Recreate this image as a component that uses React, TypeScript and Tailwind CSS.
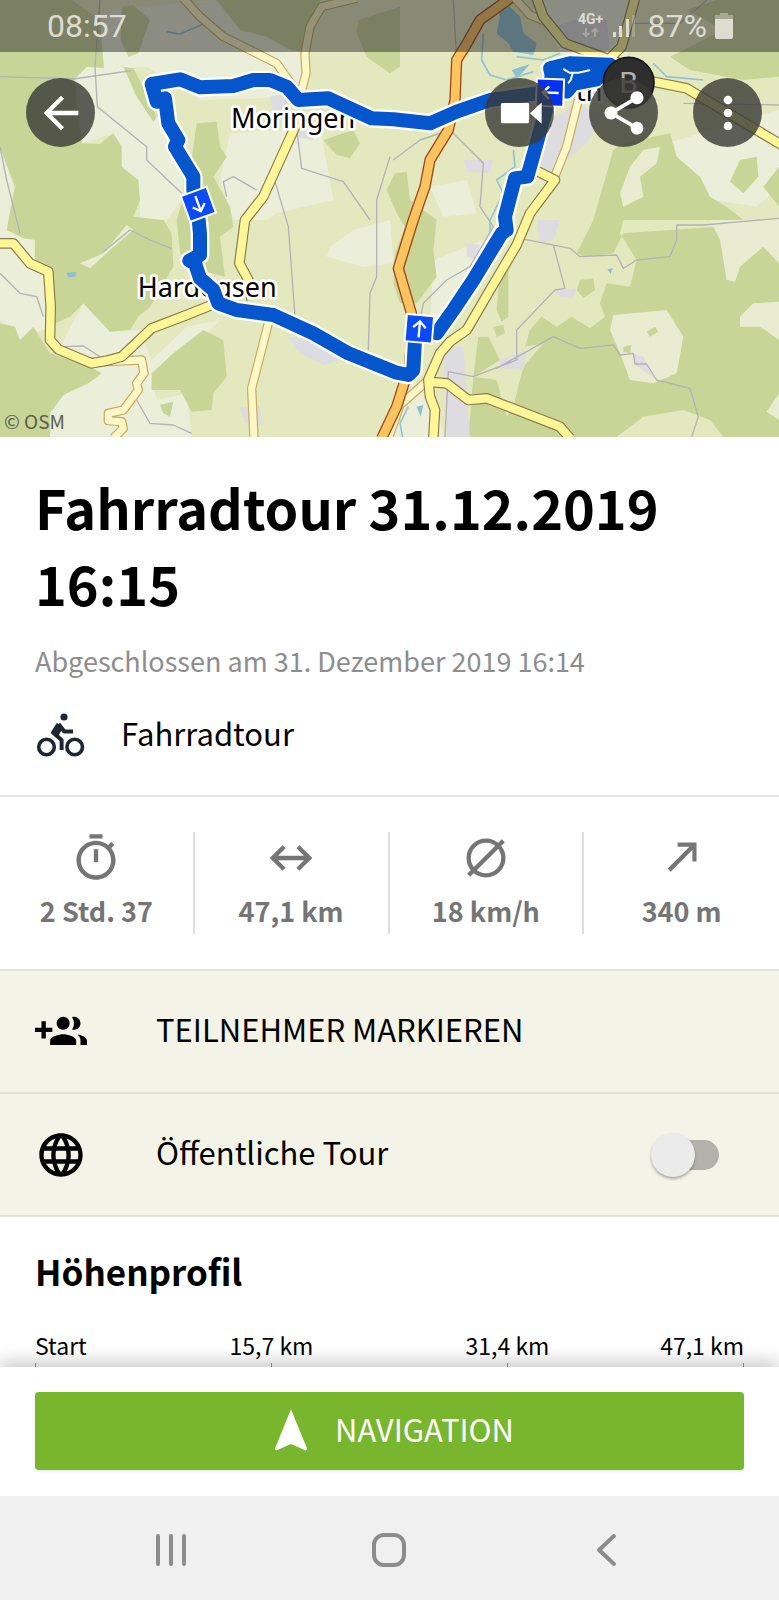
import React from "react";

type IconProps = { d: string; className?: string };

const Icon = ({ d, className = "size-[52px]" }: IconProps) => (
  <svg viewBox="0 0 24 24" fill="currentColor" aria-hidden="true" className={className}>
    <path d={d} />
  </svg>
);

const icons = {
  back: "M20 11H7.83l5.59-5.59L12 4l-8 8 8 8 1.41-1.41L7.83 13H20v-2z",
  video: "M3.9 7.4h11.6c.4 0 .7.3.7.7v7.9c0 .4-.3.7-.7.7H3.9c-.4 0-.7-.3-.7-.7V8.1c0-.4.3-.7.7-.7zM22 7.2v9.8l-5.4-4.9z",
  share:
    "M18 16.08c-.76 0-1.44.3-1.96.77L8.91 12.7c.05-.23.09-.46.09-.7s-.04-.47-.09-.7l7.05-4.11c.54.5 1.25.81 2.04.81 1.66 0 3-1.34 3-3s-1.34-3-3-3-3 1.34-3 3c0 .24.04.47.09.7L8.04 9.81C7.5 9.31 6.79 9 6 9c-1.66 0-3 1.34-3 3s1.34 3 3 3c.79 0 1.5-.31 2.04-.81l7.12 4.16c-.05.21-.08.43-.08.65 0 1.61 1.31 2.92 2.92 2.92s2.92-1.31 2.92-2.92-1.31-2.92-2.92-2.92z",
  more: "M12 8c1.1 0 2-.9 2-2s-.9-2-2-2-2 .9-2 2 .9 2 2 2zm0 2c-1.1 0-2 .9-2 2s.9 2 2 2 2-.9 2-2-.9-2-2-2zm0 6c-1.1 0-2 .9-2 2s.9 2 2 2 2-.9 2-2-.9-2-2-2z",
  timer:
    "M15 1H9v2h6V1zm-4 13h2V8h-2v6zm8.03-6.61l1.42-1.42c-.43-.51-.9-.99-1.41-1.41l-1.42 1.42C16.07 4.74 14.12 4 12 4c-4.97 0-9 4.03-9 9s4.02 9 9 9 9-4.03 9-9c0-2.12-.74-4.07-1.97-5.61zM12 20c-3.87 0-7-3.13-7-7s3.13-7 7-7 7 3.13 7 7-3.13 7-7 7z",
  ascent: "M10 4.9v1.9h5.4L5.4 16.9l1.4 1.4L16.8 8.2v5.4h1.9V4.9z",
  groupAdd:
    "M8 10H5V7H3v3H0v2h3v3h2v-3h3v-2zm10 1c1.66 0 2.99-1.34 2.99-3S19.66 5 18 5c-.32 0-.63.05-.91.14.57.81.9 1.79.9 2.86s-.34 2.04-.9 2.86c.28.09.59.14.91.14zm-5 0c1.66 0 2.99-1.34 2.99-3S14.66 5 13 5c-1.66 0-3 1.34-3 3s1.34 3 3 3zm6.62 2.16c.83.73 1.38 1.66 1.38 2.84v2h3v-2c0-1.54-2.37-2.49-4.38-2.84zM13 13c-2 0-6 1-6 3v2h12v-2c0-2-4-3-6-3z",
  globe:
    "M11.99 2C6.47 2 2 6.48 2 12s4.47 10 9.99 10C17.52 22 22 17.52 22 12S17.52 2 11.99 2zm6.93 6h-2.95c-.32-1.25-.78-2.45-1.38-3.56 1.84.63 3.37 1.91 4.33 3.56zM12 4.04c.83 1.2 1.48 2.53 1.91 3.96h-3.82c.43-1.43 1.08-2.76 1.91-3.96zM4.26 14C4.1 13.36 4 12.69 4 12s.1-1.36.26-2h3.38c-.08.66-.14 1.32-.14 2s.06 1.34.14 2H4.26zm.82 2h2.95c.32 1.25.78 2.45 1.38 3.56-1.84-.63-3.37-1.9-4.33-3.56zm2.95-8H5.08c.96-1.66 2.49-2.93 4.33-3.56C8.81 5.55 8.35 6.75 8.03 8zM12 19.96c-.83-1.2-1.48-2.53-1.91-3.96h3.82c-.43 1.43-1.08 2.76-1.91 3.96zM14.34 14H9.66c-.09-.66-.16-1.32-.16-2s.07-1.35.16-2h4.68c.09.65.16 1.32.16 2s-.07 1.34-.16 2zm.25 5.56c.6-1.11 1.06-2.31 1.38-3.56h2.95c-.96 1.65-2.49 2.93-4.33 3.56zM16.36 14c.08-.66.14-1.32.14-2s-.06-1.34-.14-2h3.38c.16.64.26 1.31.26 2s-.1 1.36-.26 2h-3.38z",
  navigate: "M12 2L4.5 20.29l.71.71L12 18l6.79 3 .71-.71z",
};

const pale = [
  "M312 30 640 0 900 150 905 290 600 300 440 200 300 210z",
  "M225 205 370 190 470 350 560 440 545 600 500 660 420 660 420 590 365 500 340 400 250 430z",
  "M690 400 960 380 1000 600 830 640 800 660 700 660 660 540z",
  "M0 440 40 560 20 690 100 715 105 790 140 820 150 980 60 1020 0 960z",
  "M180 1040 250 910 330 995 420 990 455 1080 560 980 660 960 600 1020 520 1060 455 1130 470 1200 560 1180 575 1311 150 1311 150 1240 190 1185 300 1130z",
  "M990 740 1060 690 1170 660 1180 790 1090 800 980 770z",
  "M1600 0 1900 0 1880 180 1680 160z",
  "M2000 430 2337 330 2337 560 2270 620 2140 600 2040 540z",
  "M1300 780 1500 700 1400 900 1290 960z",
  "M1230 1150 1300 1150 1330 1311 1150 1311z",
  "M1290 560 1400 540 1430 640 1330 650z",
];

const forest = [
  "M0 0H215L300 60 312 205 260 200 222 240 245 430 300 432 340 400 365 440 365 500 415 540 420 600 400 650 490 660 515 700 520 800 450 920 415 950 390 990 330 995 250 910 210 950 165 970 150 800 105 790 105 720 70 715 20 690 45 560 0 440z",
  "M0 970 45 980 60 1020 100 980 150 1060 270 1100 305 1120 265 1150 190 1185 150 1240 150 1311H0z",
  "M610 990 670 1020 680 1130 640 1180 635 1230 575 1235 540 1170 455 1170 455 1120 520 1060z",
  "M650 0H960L945 90 915 155 870 150 800 110 720 90z",
  "M365 20 400 15 450 60 415 160 385 170 362 120z",
  "M1075 60 1200 20 1200 200 1170 220 1100 170 1070 100z",
  "M370 200 400 205 450 300 470 350 460 365 410 290z",
  "M590 370 650 365 660 440 680 470 640 530 690 620 700 680 660 710 675 830 600 810 540 760 530 660 560 560 575 480z",
  "M970 420 1060 390 1080 430 1050 475 1010 465z",
  "M2010 170 2170 90 2060 30 2150 0H2337V230L2230 240 2070 210z",
  "M1870 430 2010 400 2030 470 2100 530 2130 590 2180 620 2230 660 2150 680 1870 700 1840 760 1760 770 1730 760 1780 660 1840 450z",
  "M2220 480 2270 470 2275 530 2230 580 2190 545z",
  "M2290 560 2337 500V620z",
  "M1160 570 1185 520 1220 515 1230 600 1310 660 1300 750 1310 830 1250 910 1200 910 1180 850 1185 760 1215 680 1190 640z",
  "M1870 660 1860 700 1910 780 1890 860 1820 850 1800 910 1815 950 1770 985 1715 950 1670 980 1625 950 1590 990 1575 1040 1630 1030 1570 1100 1540 1220 1520 1250 1490 1140 1420 1130 1405 1311H1850L1930 1250 2050 1230 2130 1260 2170 1311H2337V660z",
  "M1500 820 1525 790 1525 950 1505 965 1490 930z",
  "M1435 1010 1465 1010 1500 1080 1420 1130z",
  "M1740 840 1780 835 1785 870 1750 895 1730 870z",
];

const clearing = [
  "M240 790 310 760 380 675 400 690 330 750 270 805z",
  "M1930 450 1980 440 1970 490 1920 530 1930 590 1870 620 1860 580 1890 500z",
  "M2130 660H2337V790L2290 740 2220 800 2205 845 2180 840 2160 720z",
  "M2220 950 2260 910 2337 905V1020L2280 980 2220 980z",
  "M1840 945 2000 930 2050 1010 2030 1120 1960 1150 1890 1140 1860 1060 1830 990z",
  "M2300 1235 2337 1180V1260z",
];

const thicket = ["M1940 995 1965 980 1975 995 1950 1010z", "M1480 980 1510 975 1515 1000 1490 1010z", "M1870 1040 1895 1035 1890 1060 1870 1055z", "M480 1215 520 1205 510 1250 490 1240z"];

const urban = [
  "M1730 310 1810 350 1760 430 1650 520 1600 500 1650 360z",
  "M1330 1040 1390 1040 1410 1311 1340 1311z",
  "M810 290 860 280 870 330 820 350z",
  "M860 1010 960 1020 1020 1080 970 1095 900 1060z",
  "M1390 480 1480 480 1470 520 1400 515z",
  "M1610 660 1680 660 1660 720 1620 730z",
  "M1500 1080 1580 1050 1570 1110 1500 1105z",
  "M1660 870 1730 865 1720 895 1680 890z",
  "M1900 1060 1930 1070 1970 1140 1940 1120 1900 1090z",
  "M720 1220 780 1220 785 1275 735 1270z",
  "M1640 90 1720 60 1820 60 1830 150 1700 150z",
  "M880 370 940 390 940 420 890 410z",
  "M1400 730 1440 735 1430 780 1400 770z",
];

const water = [
  "M1490 10 1510 0 1560 50 1570 100 1610 130 1600 165 1540 155 1525 130 1490 100 1500 50z",
  "M1535 210 1590 192 1570 215 1550 235z",
  "M200 818 230 815 225 830 205 832z",
  "M1250 1220 1270 1215 1262 1250z",
  "M1822 808 1838 805 1832 822z",
];

const lanes = [
  "M300 0 285 200 292 320 440 440 440 480 545 580",
  "M0 230 220 237 395 212",
  "M0 440 20 540 60 700",
  "M310 755 390 690 450 720 515 745",
  "M0 820 60 880 110 890 130 950",
  "M890 390 905 505 1030 545 1110 660",
  "M680 590 670 545 700 530 770 570",
  "M825 545 865 680 885 950",
  "M1170 470 1130 600 1130 830 1110 880 1105 1050",
  "M1180 480 1260 420 1350 390 1420 460 1450 490 1440 620 1480 680 1410 800 1340 840 1270 910 1260 960",
  "M1560 715 1710 745 1740 770 1850 765 1870 805 1910 780 2010 770 2030 720 2030 675 2110 675 2337 655",
  "M1660 735 1695 865 1665 870 1550 990 1550 1080 1420 1130 1345 1115 1335 1311",
  "M1490 1105 1660 1010 1740 1045 1840 1035 1860 1065 1900 1060 1905 1092 1940 1092 1970 1140 2070 1165 2095 1250 2075 1311",
  "M190 1040 250 1038 300 1070",
  "M410 1200 450 1270 520 1275 575 1300",
  "M1360 0 1370 180",
  "M2050 310 2337 315",
  "M1900 70 2040 70 2120 0",
];

const streams = [
  "M1450 100 1445 180 1470 225 1520 240 1600 215",
  "M1550 170 1630 180 1680 160",
  "M1960 190 2000 230 2110 240",
  "M1540 450 1545 500 1490 540 1510 580 1470 660 1470 700",
  "M500 95 540 102 610 72",
  "M1225 1220 1200 1270 1208 1311",
];

const paleRoads = [
  "M550 -5 600 50 670 110 830 190 900 290",
  "M1070 -5 965 20 930 80 915 160 918 220 900 290",
  "M805 970 755 1165 762 1315",
  "M320 1085 425 1080 432 1120 410 1150 415 1170 370 1230 325 1240 325 1262 365 1265 370 1285 340 1315",
  "M1545 -5 1590 45 1650 70",
  "M1735 300 1700 440 1660 540",
  "M1285 1140 1200 1215 1165 1315",
];

const yellowRoads = [
  "M-5 730H40L90 790 145 815 152 920 150 1020 175 1048 275 1090 320 1082 365 1070 455 985 560 945 660 905",
  "M890 370 790 590 735 660 718 790 745 840 755 900",
  "M1610 -5 1630 50 1695 130 1860 190 1960 245 2060 265 2345 435",
  "M1905 -5 1865 140 1825 180",
  "M1605 510 1665 540 1590 640 1550 735 1470 870 1400 990 1350 1025 1320 1060 1285 1140 1290 1190 1305 1230 1300 1315",
  "M1280 1145 1340 1150 1405 1200 1460 1195 1680 1280 1710 1315",
];

const motorway =
  "M1530 -5 1440 60 1395 140 1370 180 1365 300 1345 390 1290 480 1275 560 1240 660 1195 805 1240 960 1228 1100 1190 1220 1145 1315";

const route =
  "M1245 1020 1240 1110 1225 1125 1190 1118 1045 1060 940 1000 820 945 710 930 655 910 640 870 600 835 585 790 568 782 600 765 600 700 595 650 580 570 580 530 525 440 535 420 505 370 495 295 470 305 455 252 540 238 600 262 700 258 760 240 810 240 860 260 895 300 985 295 1115 355 1180 358 1290 370 1370 335 1470 300 1650 275 1640 320 1610 430 1582 530 1545 535 1515 650 1520 690 1505 700 1420 840 1360 930 1310 1000";

const townLoop = "M1650 260 1655 225 1650 205 1710 190 1830 194 1790 238 1720 252 1700 275 1660 262z";

type MarkerProps = { x: number; y: number; angle: number; arrow: number; fill: string };

const RouteMarker = ({ x, y, angle, arrow, fill }: MarkerProps) => (
  <g transform={`translate(${x} ${y}) rotate(${angle})`}>
    <rect x="-41" y="-41" width="82" height="82" fill={fill} stroke="#fff" strokeWidth="6" />
    <path d="M0 26V-22M-19 -3 0 -22 19 -3" transform={`rotate(${arrow})`} fill="none" stroke="#fff" strokeWidth="7" />
  </g>
);

const RouteMap = () => (
  <svg
    viewBox="0 0 2337 1311"
    preserveAspectRatio="xMidYMid slice"
    role="img"
    aria-label="Karte der Tour"
    className="absolute inset-0 h-full w-full font-['Noto_Sans',sans-serif]"
  >
    <rect width="2337" height="1311" fill="#e4e8bf" />
    <path d={pale.join("")} fill="#ebeed9" />
    <path d={forest.join("")} fill="#c8d596" />
    <path d={clearing.join("")} fill="#e9ecd0" />
    <path d={thicket.join("")} fill="#c8d596" />
    <path d={urban.join("")} fill="#dddce0" />
    <path d={water.join("")} fill="#8cc0d2" />
    <g fill="none" strokeLinejoin="round">
      <path d={lanes.join("")} stroke="#b3b2b8" strokeWidth="4" />
      <path d={streams.join("")} stroke="#8fc3d6" strokeWidth="5" />
      <path d={paleRoads.join("")} stroke="#c9a95c" strokeWidth="28" />
      <path d={paleRoads.join("")} stroke="#fff8c6" strokeWidth="21" />
      <path d={motorway} stroke="#9a4a1c" strokeWidth="34" />
      <path d={motorway} stroke="#fdc35f" strokeWidth="26" />
      <path d={yellowRoads.join("")} stroke="#8d7b4a" strokeWidth="32" />
      <path d={yellowRoads.join("")} stroke="#fff797" strokeWidth="25" />
    </g>
    <g fill="#000" stroke="#fff" strokeWidth="16" strokeLinejoin="round" paintOrder="stroke" fontSize="81">
      <text x="693" y="383">Moringen</text>
      <text x="413" y="890">Hardegsen</text>
      <text x="1728" y="303">th</text>
    </g>
    <g strokeLinejoin="round" strokeLinecap="round">
      <path d={route} fill="none" stroke="#fff" strokeWidth="56" />
      <path d={townLoop} fill="#fff" stroke="#fff" strokeWidth="56" />
      <path d={route} fill="none" stroke="#0556cc" strokeWidth="42" />
      <path d={townLoop} fill="#0556cc" stroke="#0556cc" strokeWidth="42" />
      <path d="M1692 208 1708 218 1735 218 1768 211M1718 220 1712 240 1706 248" fill="none" stroke="#fff" strokeWidth="6" />
    </g>
    <RouteMarker x={595} y={613} angle={-20} arrow={180} fill="#0a4bf5" />
    <RouteMarker x={1650} y={278} angle={2} arrow={-90} fill="#0530f0" />
    <RouteMarker x={1258} y={986} angle={5} arrow={0} fill="#0a4bf5" />
    <circle cx="1886" cy="248" r="76" fill="#2e2e2e" stroke="#151515" strokeWidth="5" />
    <text x="1886" y="279" textAnchor="middle" fill="#b0b0b0" fontSize="90" className="font-[Roboto,sans-serif]">
      B
    </text>
  </svg>
);

const StatusBar = () => (
  <div className="flex h-[52px] items-center bg-[#2b2b2b]/50 pr-[46px] pl-[47px] font-[Roboto,sans-serif] text-[32px] leading-8 text-[#dddcd2]">
    <time>08:57</time>
    <div className="ml-auto flex items-center">
      <svg viewBox="0 0 26 28" className="mr-2 h-7 w-[26px]" aria-label="4G+">
        <text x="0" y="12" fontSize="14" fontWeight="700" fill="#dddcd2">4G+</text>
        <path d="M8 16v8M5 21l3 3 3-3M17 25v-8M14 20l3-3 3 3" fill="none" stroke="#a5a498" strokeWidth="2" />
      </svg>
      <svg viewBox="0 0 24 24" className="mr-3 h-6 w-6" aria-label="Signal" fill="#dddcd2">
        <path d="M1 18h3v5H1zM7 12h3v11H7zM14 5h3v18h-3z" />
        <path d="M20 1h3v22h-3z" opacity=".3" />
      </svg>
      <span>87%</span>
      <svg viewBox="0 0 18 26" className="ml-2 h-[26px] w-[18px]" aria-label="Akku" fill="#dddcd2">
        <path d="M0 6h18v18a2 2 0 0 1-2 2H2a2 2 0 0 1-2-2z" />
        <path d="M5 0h8v2h5v4H0V2h5z" opacity=".45" />
      </svg>
    </div>
  </div>
);

const RoundButton = ({ label, d }: { label: string; d: string }) => (
  <button aria-label={label} className="grid size-[69px] shrink-0 place-items-center rounded-full bg-[#383834]/80 text-white">
    <Icon d={d} />
  </button>
);

const stats = [
  { label: "2 Std. 37", icon: <Icon d={icons.timer} /> },
  {
    label: "47,1 km",
    icon: (
      <svg viewBox="0 0 24 24" fill="none" stroke="currentColor" strokeWidth="2" className="size-[52px]" aria-hidden="true">
        <path d="M3.5 12h17M8.8 6.8 3.6 12l5.2 5.2M15.2 6.8l5.2 5.2-5.2 5.2" />
      </svg>
    ),
  },
  {
    label: "18 km/h",
    icon: (
      <svg viewBox="0 0 24 24" fill="none" stroke="currentColor" strokeWidth="2" className="size-[52px]" aria-hidden="true">
        <circle cx="12" cy="12" r="8" />
        <path d="M4 20 20 4" />
      </svg>
    ),
  },
  { label: "340 m", icon: <Icon d={icons.ascent} /> },
];

const BikeIcon = () => (
  <svg viewBox="0 0 50 46" className="h-[46px] w-[50px]" fill="none" stroke="#1d2733" strokeWidth="3.6" aria-hidden="true">
    <circle cx="11.5" cy="34" r="7.8" />
    <circle cx="39.7" cy="34" r="7.8" />
    <circle cx="29" cy="4" r="3.6" fill="#1d2733" stroke="none" />
    <path d="M23.5 11 18 19.5 26.6 27V37M23.5 11 29.3 18.5H38" strokeWidth="4" strokeLinejoin="round" />
    <path d="M19 19 23 12l4 5-4 6z" fill="#1d2733" stroke="none" />
  </svg>
);

const distances = [
  { label: "Start", align: "items-start" },
  { label: "15,7 km", align: "items-center" },
  { label: "31,4 km", align: "items-center" },
  { label: "47,1 km", align: "items-end" },
];

export default function App() {
  return (
    <div className="flex min-h-screen flex-col bg-white font-['Noto_Sans_CJK_SC',sans-serif] text-black">
      <header className="relative flex h-[437px] flex-col overflow-hidden">
        <RouteMap />
        <div className="relative flex flex-1 flex-col">
          <StatusBar />
          <div className="mt-[26px] flex gap-[35px] pr-[17px] pl-[26px]">
            <RoundButton label="Zurück" d={icons.back} />
            <span className="flex-1" />
            <RoundButton label="Video" d={icons.video} />
            <RoundButton label="Teilen" d={icons.share} />
            <RoundButton label="Mehr" d={icons.more} />
          </div>
          <small className="mt-auto pb-1.5 pl-1 text-[19px] leading-5 text-[#5c5f50]">© OSM</small>
        </div>
      </header>

      <main className="flex-1">
        <section className="border-b-2 border-[#e2e2e2] px-[35px] pt-8 pb-9">
          <h1 className="text-[54px] leading-[76px] font-bold">Fahrradtour 31.12.2019 16:15</h1>
          <p className="mt-5 text-[27px] leading-10 text-[#8d8d8d]">Abgeschlossen am 31. Dezember 2019 16:14</p>
          <div className="mt-8 flex items-center gap-9">
            <BikeIcon />
            <span className="pb-1.5 text-[31px] leading-10">Fahrradtour</span>
          </div>
        </section>

        <ul className="grid grid-cols-4 divide-x-2 divide-[#dfdfdf] border-b-2 border-[#e2e2e0] py-[35px]">
          {stats.map((s) => (
            <li key={s.label} className="flex h-[102px] flex-col items-center text-[#757575]">
              {s.icon}
              <span className="mt-[7px] text-[27px] leading-10 font-bold whitespace-nowrap">{s.label}</span>
            </li>
          ))}
        </ul>

        <div className="bg-[#f3f3e7] text-[31px] leading-10">
          <button className="flex h-[123px] w-full items-center gap-[69px] border-b-2 border-[#e1e1da] px-[35px] text-left">
            <Icon d={icons.groupAdd} />
            <span className="pb-1.5">TEILNEHMER MARKIEREN</span>
          </button>
          <label className="flex h-[123px] items-center gap-[69px] border-b-2 border-[#e1e1da] pr-[60px] pl-[35px]">
            <Icon d={icons.globe} />
            <span className="flex-1 pb-1.5">Öffentliche Tour</span>
            <input
              type="checkbox"
              role="switch"
              className="relative h-[30px] w-16 appearance-none rounded-full bg-[#b3b2aa] before:absolute before:-top-[7px] before:-left-1 before:size-11 before:rounded-full before:bg-[#ebebeb] before:shadow-[0_2px_3px_rgba(0,0,0,0.3)] checked:before:left-6"
            />
          </label>
        </div>

        <section className="px-[35px] pt-7">
          <h2 className="text-[35px] leading-[52px] font-bold">Höhenprofil</h2>
          <div className="mt-[30px] flex justify-between text-[23px] leading-9">
            {distances.map((p) => (
              <div key={p.label} className={`flex w-px flex-col whitespace-nowrap ${p.align}`}>
                <span>{p.label}</span>
                <span className="h-1 w-px bg-[#999]" />
              </div>
            ))}
          </div>
        </section>
      </main>

      <footer className="sticky bottom-0">
        <div className="bg-white px-[35px] pt-[25px] pb-[26px] shadow-[0_-6px_16px_rgba(0,0,0,0.2)]">
          <button className="flex h-[78px] w-full items-center justify-center gap-[18px] rounded bg-[#78b62d] text-[31px] leading-10 text-white shadow-sm">
            <Icon d={icons.navigate} />
            <span className="pb-1">NAVIGATION</span>
          </button>
        </div>
        <nav className="flex h-[104px] items-center justify-between bg-[#f0f0f0] pt-1 pr-[151px] pl-[149px] text-[#8c8c8c]">
          <button aria-label="Letzte Apps">
            <svg viewBox="0 0 44 40" className="h-10 w-11" fill="none" stroke="currentColor" strokeWidth="4" strokeLinecap="round">
              <path d="M9 6v28M22 6v28M35 6v28" />
            </svg>
          </button>
          <button aria-label="Startbildschirm">
            <svg viewBox="0 0 40 40" className="size-10" fill="none" stroke="currentColor" strokeWidth="4">
              <rect x="5" y="5" width="30" height="30" rx="10" />
            </svg>
          </button>
          <button aria-label="Zurück">
            <svg viewBox="0 0 44 40" className="h-10 w-11" fill="none" stroke="currentColor" strokeWidth="4" strokeLinecap="round" strokeLinejoin="round">
              <path d="M30 6 15 20 30 34" />
            </svg>
          </button>
        </nav>
      </footer>
    </div>
  );
}
